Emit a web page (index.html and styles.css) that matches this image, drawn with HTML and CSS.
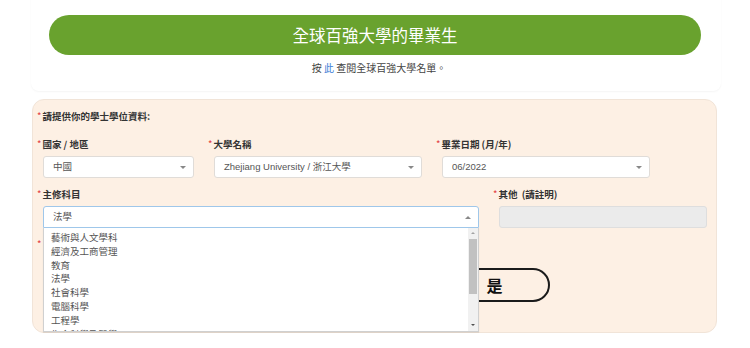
FILE: index.html
```html
<!DOCTYPE html>
<html lang="zh-Hant">
<head>
<meta charset="utf-8">
<link rel="stylesheet" href="styles.css">
</head>
<body>
<div class="top-card">
  <div class="pill">全球百強大學的畢業生</div>
  <p class="note">按 <a class="link">此</a> 查閱全球百強大學名單。</p>
</div>

<div class="form-box">
  <div class="heading"><span class="req">*</span>請提供你的學士學位資料:</div>

  <div class="row row-1">
    <div class="cell">
      <div class="label"><span class="req">*</span>國家 / 地區</div>
      <div class="select"><span>中國</span><i class="caret"></i></div>
    </div>
    <div class="cell">
      <div class="label"><span class="req">*</span>大學名稱</div>
      <div class="select"><span>Zhejiang University / 浙江大學</span><i class="caret"></i></div>
    </div>
    <div class="cell">
      <div class="label"><span class="req">*</span>畢業日期 (月/年)</div>
      <div class="select"><span>06/2022</span><i class="caret"></i></div>
    </div>
  </div>

  <div class="row row-2">
    <div class="cell">
      <div class="label"><span class="req">*</span>主修科目</div>
      <div class="select open">
        <span>法學</span><i class="caret up"></i>
        <div class="dropdown">
          <ul class="options">
            <li>藝術與人文學科</li>
            <li>經濟及工商管理</li>
            <li>教育</li>
            <li>法學</li>
            <li>社會科學</li>
            <li>電腦科學</li>
            <li>工程學</li>
            <li>生命科學及醫學</li>
          </ul>
          <div class="scrollbar">
            <i class="sb-up"></i>
            <div class="thumb"></div>
            <i class="sb-down"></i>
          </div>
        </div>
      </div>
    </div>
    <div class="cell">
      <div class="label"><span class="req">*</span>其他 &nbsp;(請註明)</div>
      <div class="input disabled"></div>
    </div>
  </div>

  <div class="row-3">
    <div class="label"><span class="req">*</span></div>
    <div class="buttons">
      <div class="btn">是</div>
    </div>
  </div>
</div>
</body>
</html>
```

FILE: styles.css
```css
* { box-sizing: border-box; }

html, body {
  margin: 0;
  padding: 0;
  background: #ffffff;
  font-family: "Liberation Sans", "Noto Sans CJK TC", sans-serif;
  color: #333;
}

.top-card {
  margin: -10px 29px 0 31px;
  padding: 25px 20px 16px 18px;
  border-radius: 8px;
  background: #fff;
  box-shadow: 0 1px 2px rgba(0, 0, 0, 0.045);
}

.pill {
  height: 40px;
  border-radius: 20px;
  background: #69a22e;
  color: #fff;
  font-family: "Noto Sans CJK TC", sans-serif;
  font-size: 16.5px;
  line-height: 40px;
  text-align: center;
}

.note {
  margin: 6px 0 0;
  font-family: "Noto Sans CJK TC", sans-serif;
  font-size: 10px;
  line-height: 14px;
  text-align: center;
  color: #444;
  padding-left: 8px;
}

.link { color: #3a7bd5; }

.form-box {
  position: relative;
  margin: 8px 0 0 32px;
  width: 685px;
  height: 234px;
  background: #fdf0e4;
  border: 1px solid #f1e4d8;
  border-radius: 12px;
  padding-top: 9px;
}

.heading,
.label {
  font-family: "Noto Sans CJK TC", sans-serif;
  font-weight: bold;
  font-size: 9.5px;
  line-height: 14px;
  color: #333;
  padding-left: 4px;
}

.req {
  color: #e2393a;
  font-weight: normal;
  margin-right: 1px;
}

.row {
  display: grid;
}

.row-1 {
  margin-top: 14px;
  grid-template-columns: 171px 228px 228px;
}

.row-2 {
  margin-top: 9px;
  grid-template-columns: 456px 228px;
}

.label { margin-bottom: 5px; }

.select,
.input {
  position: relative;
  height: 22px;
  margin: 0 10px 0 10px;
  background: #fff;
  border: 1px solid #e0dcd8;
  border-radius: 3px;
  font-size: 9.5px;
  line-height: 20px;
  color: #555;
  padding-left: 9px;
  font-family: "Liberation Sans", "Noto Sans CJK TC", sans-serif;
}

.select.open {
  border-color: #9fc7ea;
  border-radius: 3px 3px 0 0;
}

.input.disabled {
  background: #ebebeb;
  border-color: #dedede;
}

.caret {
  position: absolute;
  right: 7px;
  top: 9px;
  width: 0;
  height: 0;
  border-left: 3px solid transparent;
  border-right: 3px solid transparent;
  border-top: 3px solid #888;
}

.caret.up {
  top: 9px;
  border-top: 0;
  border-bottom: 3px solid #888;
}

.dropdown {
  position: absolute;
  z-index: 5;
  top: 21px;
  left: -1px;
  right: -1px;
  height: 104px;
  background: #fff;
  border: 1px solid #d0d0d0;
  border-top: 0;
  overflow: hidden;
  box-shadow: 0 1px 1px rgba(0, 0, 0, 0.08);
}

.options {
  list-style: none;
  margin: 0;
  padding: 3px 0 0 7px;
  font-family: "Noto Sans CJK TC", sans-serif;
  font-size: 9.5px;
  line-height: 13.8px;
  color: #555;
}

.options li { height: 13.8px; }

.scrollbar {
  position: absolute;
  top: 0;
  right: 0;
  width: 10px;
  height: 100%;
  background: #f1f1f1;
}

.sb-up, .sb-down {
  position: absolute;
  left: 3px;
  width: 0;
  height: 0;
  border-left: 2px solid transparent;
  border-right: 2px solid transparent;
}

.sb-up { top: 4px; border-bottom: 2px solid #a3a3a3; }
.sb-down { bottom: 5px; border-top: 2px solid #505050; }

.thumb {
  position: absolute;
  top: 11px;
  left: 1px;
  width: 8px;
  height: 55px;
  background: #c1c1c1;
}

.row-3 {
  margin-top: 9px;
}

.buttons {
  display: flex;
  margin: 17px 0 0 406px;
}

.btn {
  width: 111px;
  height: 34px;
  border: 2px solid #1b1b1b;
  border-radius: 17px;
  font-family: "Noto Sans CJK TC", sans-serif;
  font-weight: bold;
  font-size: 16px;
  line-height: 30px;
  text-align: center;
  color: #111;
  background: transparent;
}
```
